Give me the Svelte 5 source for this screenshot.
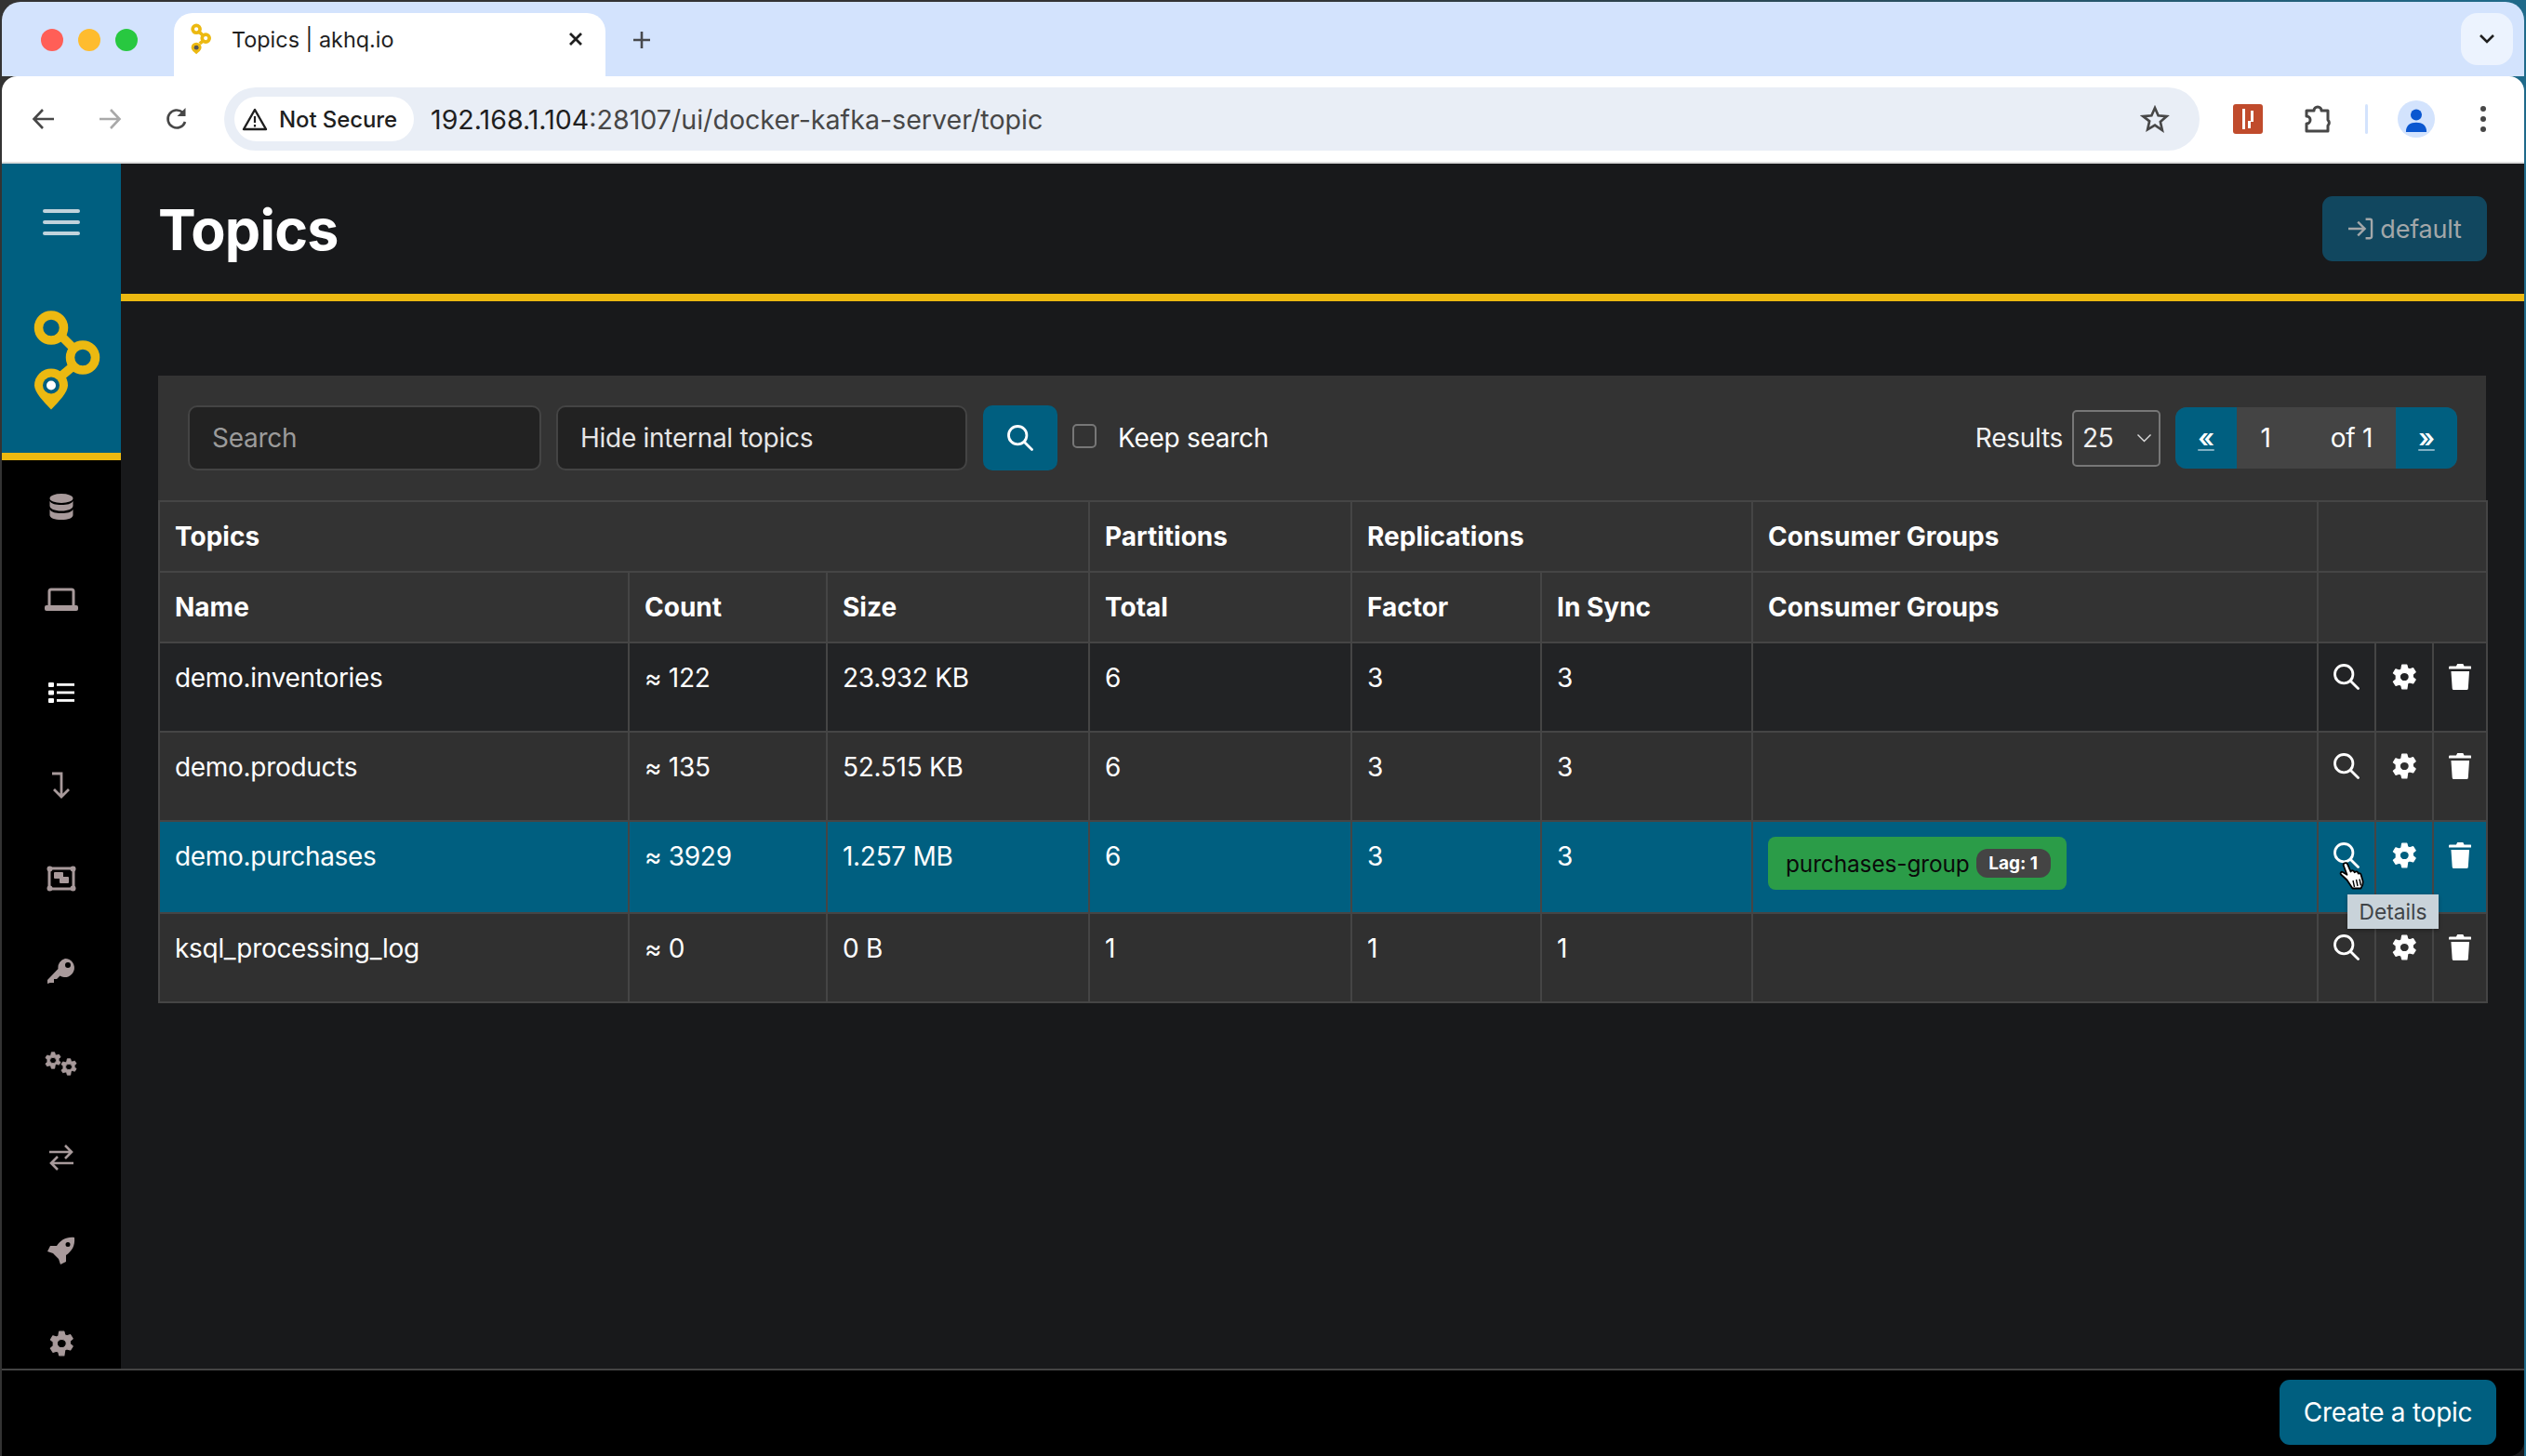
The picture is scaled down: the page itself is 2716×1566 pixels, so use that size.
<script>
  const sideIcons = ['db','laptop','list','lev','ratio','key','gears','swap','rocket','gear'];
  const groups = [
    { label: 'Topics', span: 3 },
    { label: 'Partitions', span: 1 },
    { label: 'Replications', span: 2 },
    { label: 'Consumer Groups', span: 1 },
    { label: '', span: 3 }
  ];
  const heads = ['Name', 'Count', 'Size', 'Total', 'Factor', 'In Sync', 'Consumer Groups'];
  const rows = [
    { name: 'demo.inventories', count: '≈ 122', size: '23.932 KB', total: 6, factor: 3, sync: 3 },
    { name: 'demo.products', count: '≈ 135', size: '52.515 KB', total: 6, factor: 3, sync: 3 },
    { name: 'demo.purchases', count: '≈ 3929', size: '1.257 MB', total: 6, factor: 3, sync: 3, active: true, group: 'purchases-group', lag: 'Lag: 1' },
    { name: 'ksql_processing_log', count: '≈ 0', size: '0 B', total: 1, factor: 1, sync: 1 }
  ];
</script>

{#snippet search(size)}
  <svg width={size} height={size} viewBox="0.8 0.8 15 15" fill="none" stroke="currentColor" stroke-width="1.500" stroke-linecap="round"><circle cx="6.800" cy="6.800" r="5.200"/><path d="M10.700 10.700L15 15"/></svg>
{/snippet}
{#snippet gear(size)}
  <svg width={size * 0.95} height={size} viewBox="1.500 0 21 24" preserveAspectRatio="none"><path fill="currentColor" stroke="currentColor" stroke-width="1" stroke-linejoin="round" fill-rule="evenodd" d="M10 1h4l.7 3.100 1.700.9 3-1 2 3.500-2.300 2.100v2.800l2.300 2.100-2 3.500-3-1-1.700.9L14 23h-4l-.7-3.100-1.700-.9-3 1-2-3.500 2.300-2.100V10.600L2.600 8.500l2-3.500 3 1 1.700-.9zM12 8a4 4 0 100 8 4 4 0 000-8z"/></svg>
{/snippet}
{#snippet trash(h)}
  <svg width={h * 0.875} height={h} viewBox="2 1.500 20 22.500" preserveAspectRatio="none"><path fill="currentColor" d="M3 3.500h5.500L9.500 1.500h5l1 2H21a1 1 0 011 1v1.500H2V4.500a1 1 0 011-1zM4 8h16l-1 14.500a1.500 1.500 0 01-1.500 1.500h-11A1.500 1.500 0 015 22.500z"/></svg>
{/snippet}

<div class="window">
  <div class="tabstrip">
    <div class="lights"><i class="red"></i><i class="amber"></i><i class="green"></i></div>
    <div class="tab">
      <svg class="favicon" width="22" height="34" viewBox="0 0 72 106"><g fill="none" stroke="#ecb911" stroke-width="12"><circle cx="20" cy="18" r="13"/><circle cx="53" cy="50" r="13"/><path d="M30 28l13 12M43 60L32 69"/></g><path fill="#ecb911" d="M20 65a18 18 0 0118 18c0 8-10 16-18 23C12 99 2 91 2 83a18 18 0 0118-18z"/><circle cx="20" cy="83" r="8" fill="#555"/></svg>
      <span class="tabtitle">Topics | akhq.io</span>
      <svg class="tabclose" width="16" height="16" viewBox="0 0 16 16"><path d="M2 2l12 12M14 2L2 14" stroke="#1f1f1f" stroke-width="2.800"/></svg>
    </div>
    <svg class="plus" width="24" height="24" viewBox="0 0 24 24"><path d="M12 3v18M3 12h18" stroke="#47494d" stroke-width="2.600"/></svg>
    <div class="spacer"></div>
    <div class="tabmenu"><svg width="18" height="12" viewBox="0 0 18 12"><path d="M2 2l7 7 7-7" fill="none" stroke="#1f1f1f" stroke-width="2.600"/></svg></div>
  </div>
  <div class="toolbar">
    <svg class="nav" width="26" height="26" viewBox="0 0 26 26"><path d="M24 13H3M12 3L2.500 13 12 23" fill="none" stroke="#474747" stroke-width="2.600"/></svg>
    <svg class="nav fwd" width="26" height="26" viewBox="0 0 26 26"><path d="M2 13h21M14 3l9.500 10L14 23" fill="none" stroke="#a9a9a9" stroke-width="2.600"/></svg>
    <svg class="nav reload" width="26" height="28" viewBox="0 0 26 28"><path d="M22 17a9.500 9.500 0 11-2.500-10" fill="none" stroke="#474747" stroke-width="2.600"/><path d="M22.500 2v9h-9z" fill="#474747"/></svg>
    <div class="omnibox">
      <div class="secure">
        <svg width="28" height="26" viewBox="0 0 28 26"><path d="M14 3L2 24h24z" fill="none" stroke="#1f1f1f" stroke-width="2.400" stroke-linejoin="round"/><path d="M14 10v7M14 19v2.500" stroke="#1f1f1f" stroke-width="2.200"/></svg>
        <span>Not Secure</span>
      </div>
      <span class="url">192.168.1.104<em>:28107/ui/docker-kafka-server/topic</em></span>
      <svg class="star" width="32" height="32" viewBox="0 0 24 24"><path d="M12 3l2.700 6.200 6.800.6-5.100 4.500 1.500 6.700L12 17l-5.900 3.500 1.500-6.700L2.500 9.800l6.800-.6z" fill="none" stroke="#474747" stroke-width="2"/></svg>
    </div>
    <div class="ext"><i></i><i></i><i></i></div>
    <svg class="puzzle" width="34" height="34" viewBox="0 0 34 34"><path d="M5 8h8a4 4 0 018 0h7v10a4 4 0 010 6v6H5v-8a4 4 0 000-8z" fill="none" stroke="#474747" stroke-width="3" stroke-linejoin="round"/></svg>
    <div class="divider"></div>
    <div class="avatar"><svg viewBox="0 0 26 30"><circle cx="13" cy="9" r="6.500" fill="#0b57d0"/><path d="M1 29c0-8 5-11 12-11s12 3 12 11z" fill="#0b57d0"/></svg></div>
    <div class="dots"><i></i><i></i><i></i></div>
  </div>

  <div class="app">
    <aside class="sidebar">
      <div class="brand">
        <button class="burger" aria-label="Menu"><i></i><i></i><i></i></button>
        <svg class="logo" width="72" height="107" viewBox="0 0 72 106">
          <g fill="none" stroke="#ecb911" stroke-width="9.500">
            <circle cx="19" cy="18" r="13.500"/><circle cx="53" cy="50" r="13.500"/>
            <path d="M30 27l13 13M43 59L31 69"/>
          </g>
          <path fill="#ecb911" d="M19 62a18 18 0 0118 18c0 7-10 18-18 26C11 98 1 87 1 80a18 18 0 0118-18z"/>
          <circle cx="19" cy="80" r="9" fill="#005f80"/><circle cx="19" cy="80" r="5" fill="#fff"/>
        </svg>
      </div>
      <nav class="menu">
        {#each sideIcons as ic}
          <div class="mi" class:on={ic === 'list'}>
            {#if ic === 'db'}
              <svg width="26" height="28" viewBox="0 0 26 28" fill="currentColor"><ellipse cx="13" cy="5" rx="12.500" ry="5"/><path d="M.5 8c2 3 6 4 12.500 4S23.500 11 25.500 8v5c0 3-5 5.500-12.500 5.500S.5 16 .5 13z"/><path d="M.5 17c2 3 6 4 12.500 4s10.500-1 12.500-4v6c0 3-5 5-12.500 5S.5 26 .5 23z"/></svg>
            {:else if ic === 'laptop'}
              <svg width="36" height="26" viewBox="0 0 36 26"><rect x="5" y="2" width="26" height="19" rx="2" fill="none" stroke="currentColor" stroke-width="3"/><rect x="0" y="19" width="36" height="6" rx="2" fill="currentColor"/></svg>
            {:else if ic === 'list'}
              <svg width="28" height="24" viewBox="0 0 28 24" fill="#fff"><rect x="0" y="1" width="6" height="5" rx="1"/><rect x="0" y="9.500" width="6" height="5" rx="1"/><rect x="0" y="18" width="6" height="5" rx="1"/><rect x="9" y="2" width="19" height="2.800"/><rect x="9" y="10.500" width="19" height="2.800"/><rect x="9" y="19" width="19" height="2.800"/></svg>
            {:else if ic === 'lev'}
              <svg width="22" height="30" viewBox="0 0 22 30" fill="none" stroke="currentColor" stroke-width="2.800"><path d="M1 2h10v24M3 19l8 8 8-8"/></svg>
            {:else if ic === 'ratio'}
              <svg width="32" height="28" viewBox="0 0 32 28" fill="currentColor"><rect x="3" y="3" width="26" height="22" fill="none" stroke="currentColor" stroke-width="3"/><circle cx="3.500" cy="3.500" r="3"/><circle cx="28.500" cy="3.500" r="3"/><circle cx="3.500" cy="24.500" r="3"/><circle cx="28.500" cy="24.500" r="3"/><rect x="8" y="7" width="10" height="7" rx="1"/><rect x="14" y="12" width="10" height="7" rx="1"/></svg>
            {:else if ic === 'key'}
              <svg width="30" height="30" viewBox="0 0 30 30" fill="currentColor"><path fill-rule="evenodd" d="M19 1a10 10 0 11-5.500 18.400L10 23H7v4H3l-3 1v-4L11.500 12A10 10 0 0119 1zm3 4a3 3 0 100 6 3 3 0 000-6z"/></svg>
            {:else if ic === 'gears'}
              <span class="gears"><span class="g1">{@render gear(19)}</span><span class="g2">{@render gear(19)}</span></span>
            {:else if ic === 'swap'}
              <svg width="26" height="28" viewBox="0 0 26 28" fill="none" stroke="currentColor" stroke-width="2.600"><path d="M0 8h24M17 1l7 7-7 7M26 20H2M9 13l-7 7 7 7"/></svg>
            {:else if ic === 'rocket'}
              <svg width="30" height="30" viewBox="0 0 30 30" fill="currentColor"><path fill-rule="evenodd" d="M29 1c1 9-3 15-9 19v7l-6 3-2-6-6-6-6-2 3-6h7C14 4 20 0 29 1zm-7 5a2.500 2.500 0 100 5 2.500 2.500 0 000-5z"/></svg>
            {:else}
              {@render gear(28)}
            {/if}
          </div>
        {/each}
      </nav>
    </aside>

    <main class="main">
      <header class="title">
        <h1>Topics</h1>
        <button class="default">
          <svg width="28" height="26" viewBox="0 0 30 28" fill="none" stroke="currentColor" stroke-width="2.600"><path d="M1 14h18M12 6l8 8-8 8M21 3h5a2 2 0 012 2v18a2 2 0 01-2 2h-5"/></svg>
          default
        </button>
      </header>

      <section class="card">
        <div class="filters">
          <div class="field search">Search</div>
          <div class="field hide">Hide internal topics</div>
          <button class="go" aria-label="Search">{@render search(28)}</button>
          <span class="check"></span>
          <span class="keep">Keep search</span>
          <span class="grow"></span>
          <span class="results">Results</span>
          <div class="select">25<svg width="17" height="10" viewBox="0 0 16 10"><path d="M1 1.500L8 8.500l7-7" fill="none" stroke="#ddd" stroke-width="1.400"/></svg></div>
          <div class="pager"><span class="pg">«</span><span class="cur">1</span><span class="of">of 1</span><span class="pg">»</span></div>
        </div>

        <table>
          <colgroup>
            <col class="c1"/><col class="c2"/><col class="c3"/><col class="c4"/><col class="c5"/><col class="c6"/><col class="c7"/><col class="c8"/><col class="c9"/><col class="c10"/>
          </colgroup>
          <thead>
            <tr>{#each groups as g}<th colspan={g.span}>{g.label}</th>{/each}</tr>
            <tr>{#each heads as h}<th>{h}</th>{/each}<th colspan="3"></th></tr>
          </thead>
          <tbody>
            {#each rows as r}
              <tr class:active={r.active}>
                <td>{r.name}</td><td>{r.count}</td><td>{r.size}</td><td>{r.total}</td><td>{r.factor}</td><td>{r.sync}</td>
                <td class="cg">{#if r.group}<span class="grp">{r.group}<span class="lag">{r.lag}</span></span>{/if}</td>
                <td class="act">{@render search(28)}</td>
                <td class="act">{@render gear(28)}</td>
                <td class="act">{@render trash(28)}</td>
              </tr>
            {/each}
          </tbody>
        </table>
      </section>
      <div class="tooltip">Details</div>
      <svg class="cursor" width="28" height="32" viewBox="0 0 28 32"><path d="M5.500 1.500c1.500-1 3.200-.2 3.800 1.300l3.200 7.700.6-.8c1-.8 2.400-.5 3 .5l.6 1 .6-.5c1-.6 2.500-.3 3 .8l.5 1c1-.5 2.300 0 2.700 1l2 7c.5 2-.5 5.500-2 8H14.500l-6-9-6.500-6c-1-1.200 0-3 1.500-2.700l5 3L5 4.500c-.5-1-.3-2.300.5-3z" fill="#fff" stroke="#000" stroke-width="1.800" stroke-linejoin="round"/><path d="M15 20l1.500 7M18.500 19l1.500 7M22 18.500l1.500 7" stroke="#000" stroke-width="1.400"/></svg>
    </main>
  </div>

  <footer class="bottom"><button class="create">Create a topic</button></footer>
</div>

<style>
  :global(body) { margin: 0; background: #000; }
  .window { width: 2716px; height: 1566px; display: flex; flex-direction: column; position: relative; overflow: hidden; box-sizing: border-box; padding-top: 2px; font-family: Inter, "Noto Sans", sans-serif; background: linear-gradient(90deg, #333 0 50%, #1f6a8a 100%); }
  .tabstrip { height: 80px; background: #d3e3fd; display: flex; align-items: flex-end; flex: none; border-radius: 20px 20px 0 0; margin: 0 2px; position: relative; }
  .lights { display: flex; gap: 16px; padding: 0 0 27px 42px; width: 141px; box-sizing: border-box; flex: none; }
  .lights i { width: 24px; height: 24px; border-radius: 50%; flex: none; }
  .red { background: #ff5f57; } .amber { background: #febc2e; } .green { background: #28c840; }
  .tab { width: 464px; height: 68px; margin-left: 44px; background: #fff; border-radius: 20px 20px 0 0; display: flex; align-items: center; flex: none; box-sizing: border-box; padding: 0 24px 12px 18px; }
  .favicon { flex: none; margin-right: 22px; }
  .tabtitle { font: 400 23.400px Inter, sans-serif; color: #1f1f1f; flex: 1; }
  .tabclose { flex: none; }
  .plus { flex: none; margin: 0 0 27px 27px; }
  .spacer { flex: 1; }
  .tabmenu { width: 56px; height: 56px; border-radius: 18px; background: #ecf3fe; margin: 0 12px 12px 0; display: flex; align-items: center; justify-content: center; }
  .toolbar { height: 92px; background: #fff; border-bottom: 2px solid #dcdcdc; margin: 0 2px; display: flex; align-items: center; flex: none; border-radius: 16px 16px 0 0; position: relative; }
  .nav { flex: none; margin-left: 32px; }
  .fwd { margin-left: 45px; }
  .reload { margin-left: 46px; }
  .omnibox { flex: none; width: 2124px; height: 68px; margin-left: 38px; border-radius: 34px; background: #e9eef6; display: flex; align-items: center; box-sizing: border-box; padding-left: 11px; padding-right: 32px; }
  .secure { display: flex; align-items: center; gap: 12px; height: 48px; width: 193px; box-sizing: border-box; background: #fff; border-radius: 24px; padding: 0 0 0 8px; font: 500 24px Inter, sans-serif; color: #1f1f1f; letter-spacing: -.1px; white-space: nowrap; flex: none; }
  .url { font: 400 28.600px Inter, sans-serif; color: #1f1f1f; margin-left: 18px; flex: 1; }
  .url em { font-style: normal; color: #474747; }
  .star { flex: none; }
  .ext { flex: none; width: 32px; height: 32px; margin-left: 36px; background: #c04b2c; border-radius: 3px; display: flex; gap: 3px; align-items: center; justify-content: center; }
  .ext i { width: 3px; background: #fff; height: 22px; display: block; }
  .ext i:nth-child(2) { height: 8px; margin-top: 12px; }
  .ext i:last-child { height: 12px; margin-top: -6px; margin-left: -3px; }
  .puzzle { flex: none; margin-left: 42px; }
  .divider { flex: none; width: 3px; height: 32px; background: #d3e3fd; margin-left: 34px; border-radius: 2px; }
  .avatar { flex: none; width: 40px; height: 40px; margin-left: 32px; border-radius: 50%; background: #d3e3fd; display: flex; align-items: flex-end; justify-content: center; overflow: hidden; }
  .avatar svg { width: 24px; height: 28px; margin-bottom: 5px; }
  .dots { flex: none; margin-left: 49px; display: flex; flex-direction: column; gap: 5px; }
  .dots i { width: 6px; height: 6px; border-radius: 50%; background: #474747; display: block; }

  .app { flex: 1; min-height: 0; display: flex; margin: 0 2px; background: #18191b; position: relative; }
  .sidebar { width: 128px; flex: none; background: #000; display: flex; flex-direction: column; }
  .brand { background: #005f80; border-bottom: 8px solid #ecb911; flex: none; height: 311px; display: flex; flex-direction: column; align-items: center; }
  .burger { all: unset; display: flex; flex-direction: column; gap: 8px; margin-top: 49px; width: 40px; }
  .burger i { height: 4px; border-radius: 2px; background: #c1d3dc; display: block; }
  .logo { margin-top: 81px; margin-left: 12px; }
  .menu { display: flex; flex-direction: column; }
  .mi { height: 100px; display: flex; align-items: center; justify-content: center; color: #a89a9b; flex: none; }
  .gears { display: block; position: relative; width: 36px; height: 28px; }
  .gears span { position: absolute; display: block; }
  .g1 { left: 0; top: 0; } .g2 { left: 17px; top: 7px; }

  .main { flex: 1; min-width: 0; padding-bottom: 94px; position: relative; }
  .title { height: 140px; border-bottom: 8px solid #ecb911; display: flex; align-items: flex-start; justify-content: space-between; padding: 0 40px; }
  h1 { font: 700 61px/1 Inter, sans-serif; color: #fff; margin: 41px 0 0; letter-spacing: -.8px; }
  .default { margin-top: 35px; width: 177px; height: 70px; border: 0; border-radius: 11px; background: #11475f; color: #a3a7a9; font: 400 27px Inter, sans-serif; letter-spacing: -.2px; display: flex; align-items: center; justify-content: center; gap: 7px; }
  .card { margin: 80px 0 0 40px; background: #333; width: 2503px; }
  .filters { height: 134px; display: flex; align-items: center; padding: 0 31px 0 32px; box-sizing: border-box; color: #fff; font: 400 28px Inter, sans-serif; letter-spacing: -.28px; }
  .field { height: 70px; box-sizing: border-box; border: 2px solid #444; border-radius: 10px; background: #222; display: flex; align-items: center; padding: 0 24px; flex: none; }
  .search { width: 380px; color: #9b9b9b; }
  .hide { width: 442px; margin-left: 16px; color: #e6e6e6; }
  .go { all: unset; width: 80px; height: 70px; margin-left: 17px; background: #005f80; border-radius: 10px; color: #fff; display: flex; align-items: center; justify-content: center; flex: none; }
  .check { width: 26px; height: 26px; border: 2px solid #777; background: #333; border-radius: 5px; box-sizing: border-box; margin-left: 16px; margin-top: -5px; flex: none; }
  .keep { margin-left: 23px; }
  .grow { flex: 1; }
  .results { color: #f2f2f2; }
  .select { width: 95px; height: 61px; margin-left: 10px; box-sizing: border-box; border: 2px solid #777; border-radius: 5px; background: #383838; display: flex; align-items: center; justify-content: space-between; padding: 0 7px 0 9px; color: #f0f0f0; }
  .pager { margin-left: 16px; height: 66px; width: 303px; border-radius: 12px; overflow: hidden; display: flex; align-items: stretch; background: #444; }
  .pg { width: 66px; background: #005f80; color: #fff; display: flex; align-items: center; justify-content: center; text-decoration: underline; text-decoration-color: #7fb0c4; font-weight: 600; flex: none; }
  .cur { width: 62px; display: flex; align-items: center; justify-content: center; }
  .of { flex: 1; display: flex; align-items: center; justify-content: flex-end; padding-right: 25px; }

  table { width: 2503px; table-layout: fixed; border-collapse: collapse; color: #fff; font: 400 28px Inter, sans-serif; letter-spacing: -.3px; }
  .c1 { width: 505px; } .c2 { width: 213px; } .c3 { width: 282px; } .c4 { width: 282px; } .c5 { width: 204px; }
  .c6 { width: 227px; } .c7 { width: 608px; } .c8 { width: 62px; } .c9 { width: 62px; } .c10 { width: 58px; }
  th, td { border: 2.500px solid #454545; text-align: left; padding: 0 16px; box-sizing: border-box; }
  th { font-weight: 700; height: 76px; background: #333; font-size: 28px; letter-spacing: 0; }
  td { height: 96px; background: #222325; vertical-align: top; padding-top: 20px; line-height: 34px; }
  tbody tr:nth-child(even) td { background: #303030; }
  tbody tr.active td { background: #005f80; height: 99px; }
  .act { padding: 22px 0 0; text-align: center; }
  .act svg { display: block; margin: 0 auto; }
  .cg { padding-top: 16px; }
  .grp { display: inline-flex; align-items: center; height: 57px; padding: 0 0 0 19px; background: #2b9c48; border-radius: 8px; color: #0a0a0a; font-size: 24.400px; letter-spacing: -.1px; gap: 7px; width: 321px; box-sizing: border-box; white-space: nowrap; }
  .lag { background: #444; color: #fff; font-weight: 700; font-size: 19px; letter-spacing: 0; height: 31px; line-height: 31px; width: 80px; text-align: center; border-radius: 12px; flex: none; }
  .tooltip { position: absolute; left: 2394px; top: 786px; width: 98px; height: 37px; background: #c9d3da; color: #404448; font: 400 22.750px/37px Inter, sans-serif; text-align: center; z-index: 3; box-shadow: 0 2px 4px rgba(0,0,0,.3); }
  .cursor { position: absolute; left: 2385px; top: 751px; z-index: 4; }

  .bottom { position: absolute; left: 2px; right: 2px; bottom: 0; height: 92px; background: #000; border-top: 2px solid #444; border-radius: 0 0 16px 16px; display: flex; justify-content: flex-end; align-items: flex-start; }
  .create { margin: 10px 30px 0 0; width: 233px; height: 70px; background: #005f80; color: #fff; font: 400 28px Inter, sans-serif; letter-spacing: -.25px; border: 0; border-radius: 11px; }
</style>
